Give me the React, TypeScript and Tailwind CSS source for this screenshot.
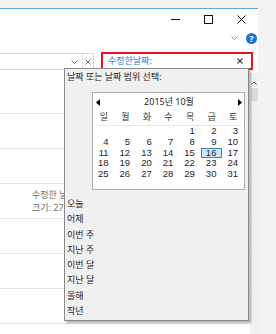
import React from 'react';

const DAYS = ['일', '월', '화', '수', '목', '금', '토'];
const QUICK = ['오늘', '어제', '이번 주', '지난 주', '이번 달', '지난 달', '올해', '작년'];

// October 2015 starts on a Thursday; six rows like the Windows calendar
const cells: (number | null)[] = [
  null, null, null, null,
  ...Array.from({ length: 31 }, (_, i) => i + 1),
];
while (cells.length < 42) cells.push(null);

function Calendar() {
  return (
    <div className="ml-[27px] mt-[9px] w-[153px] h-[98px] bg-white border border-[#acacac]">
      <div className="h-[18px] flex items-center justify-between pl-[3px] pr-[2px]">
        <svg width="4" height="7" viewBox="0 0 4 7"><polygon points="4,0 4,7 0,3.5" fill="#000" /></svg>
        <span className="text-[9px] leading-[12px] text-[#1e1e1e]">2015년 10월</span>
        <svg width="4" height="7" viewBox="0 0 4 7"><polygon points="0,0 0,7 4,3.5" fill="#000" /></svg>
      </div>
      <div className="grid grid-cols-7 h-[12px]">
        {DAYS.map(d => (
          <span key={d} className="text-center text-[9px] leading-[12px] text-[#333]">{d}</span>
        ))}
      </div>
      <div className="mx-[3px] mt-[2px] h-px bg-[#e6e6e6]" />
      <div className="grid grid-cols-7 font-['Liberation_Sans',sans-serif]">
        {cells.map((n, i) => (
          <span
            key={i}
            className={
              n === 16
                ? 'h-[10.75px] text-right pr-[5px] text-[9.5px] leading-[8.75px] text-[#1e1e1e] bg-[#cce8ff] border border-[#3d80c4]'
                : 'h-[10.75px] text-right pr-[6px] text-[9.5px] leading-[10.75px] text-[#1e1e1e]'
            }
          >
            {n ?? ''}
          </span>
        ))}
      </div>
    </div>
  );
}

export default function App() {
  return (
    <div className="relative w-[276px] h-[334px] overflow-hidden bg-[#f3f3f3] font-['Noto_Sans','Noto_Sans_CJK_KR',sans-serif]">
      <div className="h-[8px]" />
      <div className="w-[258px] h-[326px] bg-white border-t border-[#5aa9ea]">
        {/* title bar */}
        <div className="h-[20px] flex justify-end">
          <div className="w-[33px] flex items-center justify-center">
            <div className="w-[9px] h-px bg-[#111]" />
          </div>
          <div className="w-[33px] flex items-center justify-center">
            <div className="w-[9px] h-[9px] border border-[#111]" />
          </div>
          <div className="w-[33px] flex items-center justify-center">
            <svg width="9" height="9" viewBox="0 0 9 9">
              <path d="M0.5 0.5 L8.5 8.5 M8.5 0.5 L0.5 8.5" stroke="#111" strokeWidth="1" />
            </svg>
          </div>
        </div>

        {/* ribbon toggle + help */}
        <div className="h-[18px] flex items-center justify-end gap-[8px] pr-[1px]">
          <svg width="7" height="4" viewBox="0 0 7 4">
            <path d="M0.5 0.5 L3.5 3.5 L6.5 0.5" stroke="#9a9a9a" strokeWidth="1" fill="none" />
          </svg>
          <div className="w-[11px] h-[11px] rounded-full bg-[#1d6fd1] flex items-center justify-center text-white text-[9px] font-bold leading-none">?</div>
        </div>

        {/* address + search */}
        <div className="h-[25px] flex items-start">
          <div className="mt-[6px] w-[94px] h-[17px] flex border-y border-r border-[#d9d9d9]">
            <div className="flex-1" />
            <div className="w-[12px] mr-[2px] flex items-center justify-center">
              <svg width="7" height="4" viewBox="0 0 7 4">
                <path d="M0.5 0.5 L3.5 3.5 L6.5 0.5" stroke="#707070" strokeWidth="1" fill="none" />
              </svg>
            </div>
            <div className="w-[11px] border-l border-[#e3e3e3] flex items-center justify-center">
              <svg width="6" height="6" viewBox="0 0 6 6">
                <path d="M0.5 0.5 L5.5 5.5 M5.5 0.5 L0.5 5.5" stroke="#707070" strokeWidth="1" />
              </svg>
            </div>
          </div>
          <div className="mt-[5px] ml-[7px] w-[152px] h-[18px] border-2 border-[#e81123] flex items-center justify-between pl-[5px] pr-[8px]">
            <span className="text-[9px] leading-[12px] text-[#2e7bd3]">수정한날짜:</span>
            <svg width="6" height="6" viewBox="0 0 6 6">
              <path d="M0.5 0.5 L5.5 5.5 M5.5 0.5 L0.5 5.5" stroke="#444" strokeWidth="1.2" />
            </svg>
          </div>
        </div>

        {/* results + scrollbar */}
        <div className="flex h-[262px]">
          <div className="w-[250px] pt-[7px]">
            {Array.from({ length: 7 }, (_, i) => (
              <div key={i} className="h-[35px] border-b border-[#e8e8e8]">
                {i === 3 && (
                  <div className="ml-[32px] w-[32px] overflow-hidden pt-[4px] text-[9px] leading-[13px] text-[#6d6d6d] whitespace-nowrap">
                    <div>수정한 날짜</div>
                    <div>크기: 27</div>
                  </div>
                )}
              </div>
            ))}
          </div>
          <div className="w-[8px] mt-[1px] bg-[#f0f0f0] flex flex-col items-center">
            <svg className="mt-[8px]" width="6" height="4" viewBox="0 0 6 4">
              <path d="M0.5 3.5 L3 1 L5.5 3.5" stroke="#555" strokeWidth="1" fill="none" />
            </svg>
            <div className="mt-[3px] w-[7px] ml-[1px] h-[13px] bg-[#dadada]" />
          </div>
        </div>
      </div>

      {/* date picker dropdown */}
      <div className="absolute left-[64px] top-[68px] w-[185px] h-[253px] bg-[#f0f0f0] border border-[#8a8a8a] shadow-[2px_2px_2px_rgba(0,0,0,0.3)]">
        <div className="ml-[2px] mt-[2px] h-[12px] text-[9px] leading-[12px] text-[#1e1e1e]">날짜 또는 날짜 범위 선택:</div>
        <Calendar />
        <ul className="mt-[6px] ml-[2px]">
          {QUICK.map(q => (
            <li key={q} className="h-[15.3px] text-[9px] leading-[15.3px] text-[#1e1e1e]">{q}</li>
          ))}
        </ul>
      </div>
    </div>
  );
}
